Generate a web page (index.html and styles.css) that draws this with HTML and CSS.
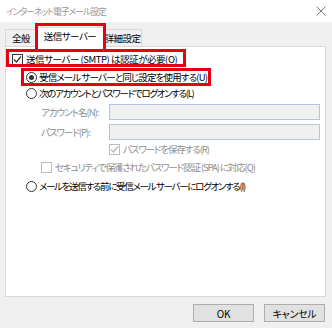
FILE: index.html
```html
<!DOCTYPE html>
<html lang="ja">
<head>
    <meta charset="utf-8" />
    <title>インターネット電子メール設定</title>
    <link rel="stylesheet" href="styles.css">
</head>
<body>
    <div class="window">
        <!--タイトルバー-->
        <div class="titlebar">
            <span class="title">インターネット電子メール設定</span>
            <svg class="close" width="10" height="10" viewBox="0 0 10 10">
                <path d="M0.5 0.5L9.5 9.5M9.5 0.5L0.5 9.5" stroke="#7a7a7a" stroke-width="1" fill="none" />
            </svg>
        </div>
        <div class="content">
            <!--タブ-->
            <div class="tabs">
                <div class="tab">全般</div>
                <div class="tab current">送信サーバー</div>
                <div class="tab">詳細設定</div>
            </div>
            <div class="panel">
                <div class="row row-auth">
                    <span class="check"><svg width="9" height="9" viewBox="0 0 9 9"><path d="M1 4.5L3.5 7L8 1.5" stroke="#333" stroke-width="1.2" fill="none" /></svg></span>
                    <span>送信サーバー (SMTP) は認証が必要(O)</span>
                </div>
                <div class="row row-radio row-same">
                    <span class="radio on"></span>
                    <span>受信メール サーバーと同じ設定を使用する(U)</span>
                </div>
                <div class="row row-radio row-tight row-kana">
                    <span class="radio"></span>
                    <span>次のアカウントとパスワードでログオンする(L)</span>
                </div>
                <div class="row row-field">
                    <span class="label">アカウント名(N):</span>
                    <span class="input"></span>
                </div>
                <div class="row row-field">
                    <span class="label">パスワード(P):</span>
                    <span class="input"></span>
                </div>
                <div class="row row-save row-tight disabled">
                    <span class="check"><svg width="9" height="9" viewBox="0 0 9 9"><path d="M1 4.5L3.5 7L8 1.5" stroke="#b5b5b5" stroke-width="1.2" fill="none" /></svg></span>
                    <span>パスワードを保存する(R)</span>
                </div>
                <div class="row row-spa disabled">
                    <span class="check"></span>
                    <span>セキュリティで保護されたパスワード認証 (SPA) に対応(Q)</span>
                </div>
                <div class="row row-radio row-last row-kana">
                    <span class="radio"></span>
                    <span>メールを送信する前に受信メール サーバーにログオンする(I)</span>
                </div>
            </div>
            <div class="buttons">
                <button class="btn">OK</button>
                <button class="btn">キャンセル</button>
            </div>
        </div>
        <!--赤枠-->
        <div class="mark mark-tab"></div>
        <div class="mark mark-auth"></div>
        <div class="mark mark-same"></div>
    </div>
</body>
</html>
```

FILE: styles.css
```css
* {
    margin: 0;
    padding: 0;
    box-sizing: border-box;
}

body {
    font-family: "Noto Sans CJK JP", "Noto Sans", sans-serif;
    font-size: 9.5px;
    letter-spacing: -0.5px;
    font-feature-settings: "palt";
    color: #000;
    background-color: #f0f0f0;
}

.window {
    position: relative;
    width: 332px;
    height: 328px;
    background-color: #f0f0f0;
    overflow: hidden;
}

.titlebar {
    height: 22px;
    background-color: #fff;
    display: flex;
    align-items: center;
    justify-content: space-between;
    padding: 0 6px 0 6px;
}

    .titlebar .title {
        color: #999;
        font-size: 9px;
        letter-spacing: -1.2px;
    }

.content {
    padding: 5px 0 0 5px;
}

.tabs {
    display: flex;
    align-items: flex-end;
    height: 19px;
    position: relative;
    z-index: 1;
}

.tab {
    height: 17px;
    line-height: 16px;
    border: 1px solid #d9d9d9;
    border-bottom: none;
    background-color: #f0f0f0;
    text-align: center;
    white-space: nowrap;
}

    .tab:first-child {
        width: 32px;
    }

    .tab.current {
        width: 68px;
        height: 20px;
        margin-bottom: -1px;
        margin-left: -1px;
        background-color: #fff;
        line-height: 16px;
    }

    .tab:last-child {
        width: 38px;
        border-left: none;
    }

.panel {
    width: 321px;
    height: 251px;
    background-color: #fff;
    border: 1px solid #d9d9d9;
    padding-top: 4px;
    display: flex;
    flex-direction: column;
}

.row {
    height: 16px;
    display: flex;
    align-items: center;
    margin-top: 2px;
    white-space: nowrap;
}

    .row:first-child {
        margin-top: 0;
    }

.row-tight {
    margin-top: 0;
}

.row-auth {
    padding-left: 6px;
    letter-spacing: -0.45px;
}

.row-radio {
    padding-left: 20px;
}

.row-same {
    letter-spacing: -0.85px;
}

.row-kana {
    letter-spacing: -1.3px;
}

.row-field {
    height: 18px;
    padding-left: 35px;
}

.row-save {
    padding-left: 103px;
    letter-spacing: -1.1px;
}

.row-spa {
    padding-left: 35px;
    letter-spacing: -1.1px;
}

.row-last {
    margin-top: 3px;
}

.disabled,
.label {
    color: #8d8d8d;
}

.label {
    width: 68px;
    letter-spacing: -1px;
}

.input {
    width: 211px;
    height: 16px;
    border: 1px solid #abc7e4;
    background-color: #f0f0f0;
}

.check {
    width: 11px;
    height: 11px;
    border: 1px solid #333;
    background-color: #fff;
    margin-right: 3px;
    display: flex;
    align-items: center;
    justify-content: center;
    flex-shrink: 0;
}

.disabled .check {
    border-color: #bcbcbc;
}

.radio {
    width: 11px;
    height: 11px;
    border: 1px solid #333;
    border-radius: 50%;
    background-color: #fff;
    margin-right: 2px;
    position: relative;
    flex-shrink: 0;
}

    .radio.on::after {
        content: "";
        position: absolute;
        left: 2px;
        top: 2px;
        width: 5px;
        height: 5px;
        border-radius: 50%;
        background-color: #333;
    }

.buttons {
    display: flex;
    justify-content: flex-end;
    gap: 10px;
    padding-right: 7px;
    margin-top: 7px;
}

.btn {
    width: 61px;
    height: 18px;
    font-family: inherit;
    font-size: 10px;
    letter-spacing: -0.3px;
    font-feature-settings: "palt";
    background-color: #e1e1e1;
    border: 1px solid #adadad;
    color: #000;
}

/*赤枠*/
.mark {
    position: absolute;
    border: 3px solid #e60012;
    z-index: 2;
}

.mark-tab {
    left: 35px;
    top: 23px;
    width: 71px;
    height: 28px;
    border-bottom: none;
}

.mark-auth {
    left: 6px;
    top: 49px;
    width: 180px;
    height: 18px;
}

.mark-same {
    left: 21px;
    top: 68px;
    width: 190px;
    height: 18px;
}
```
